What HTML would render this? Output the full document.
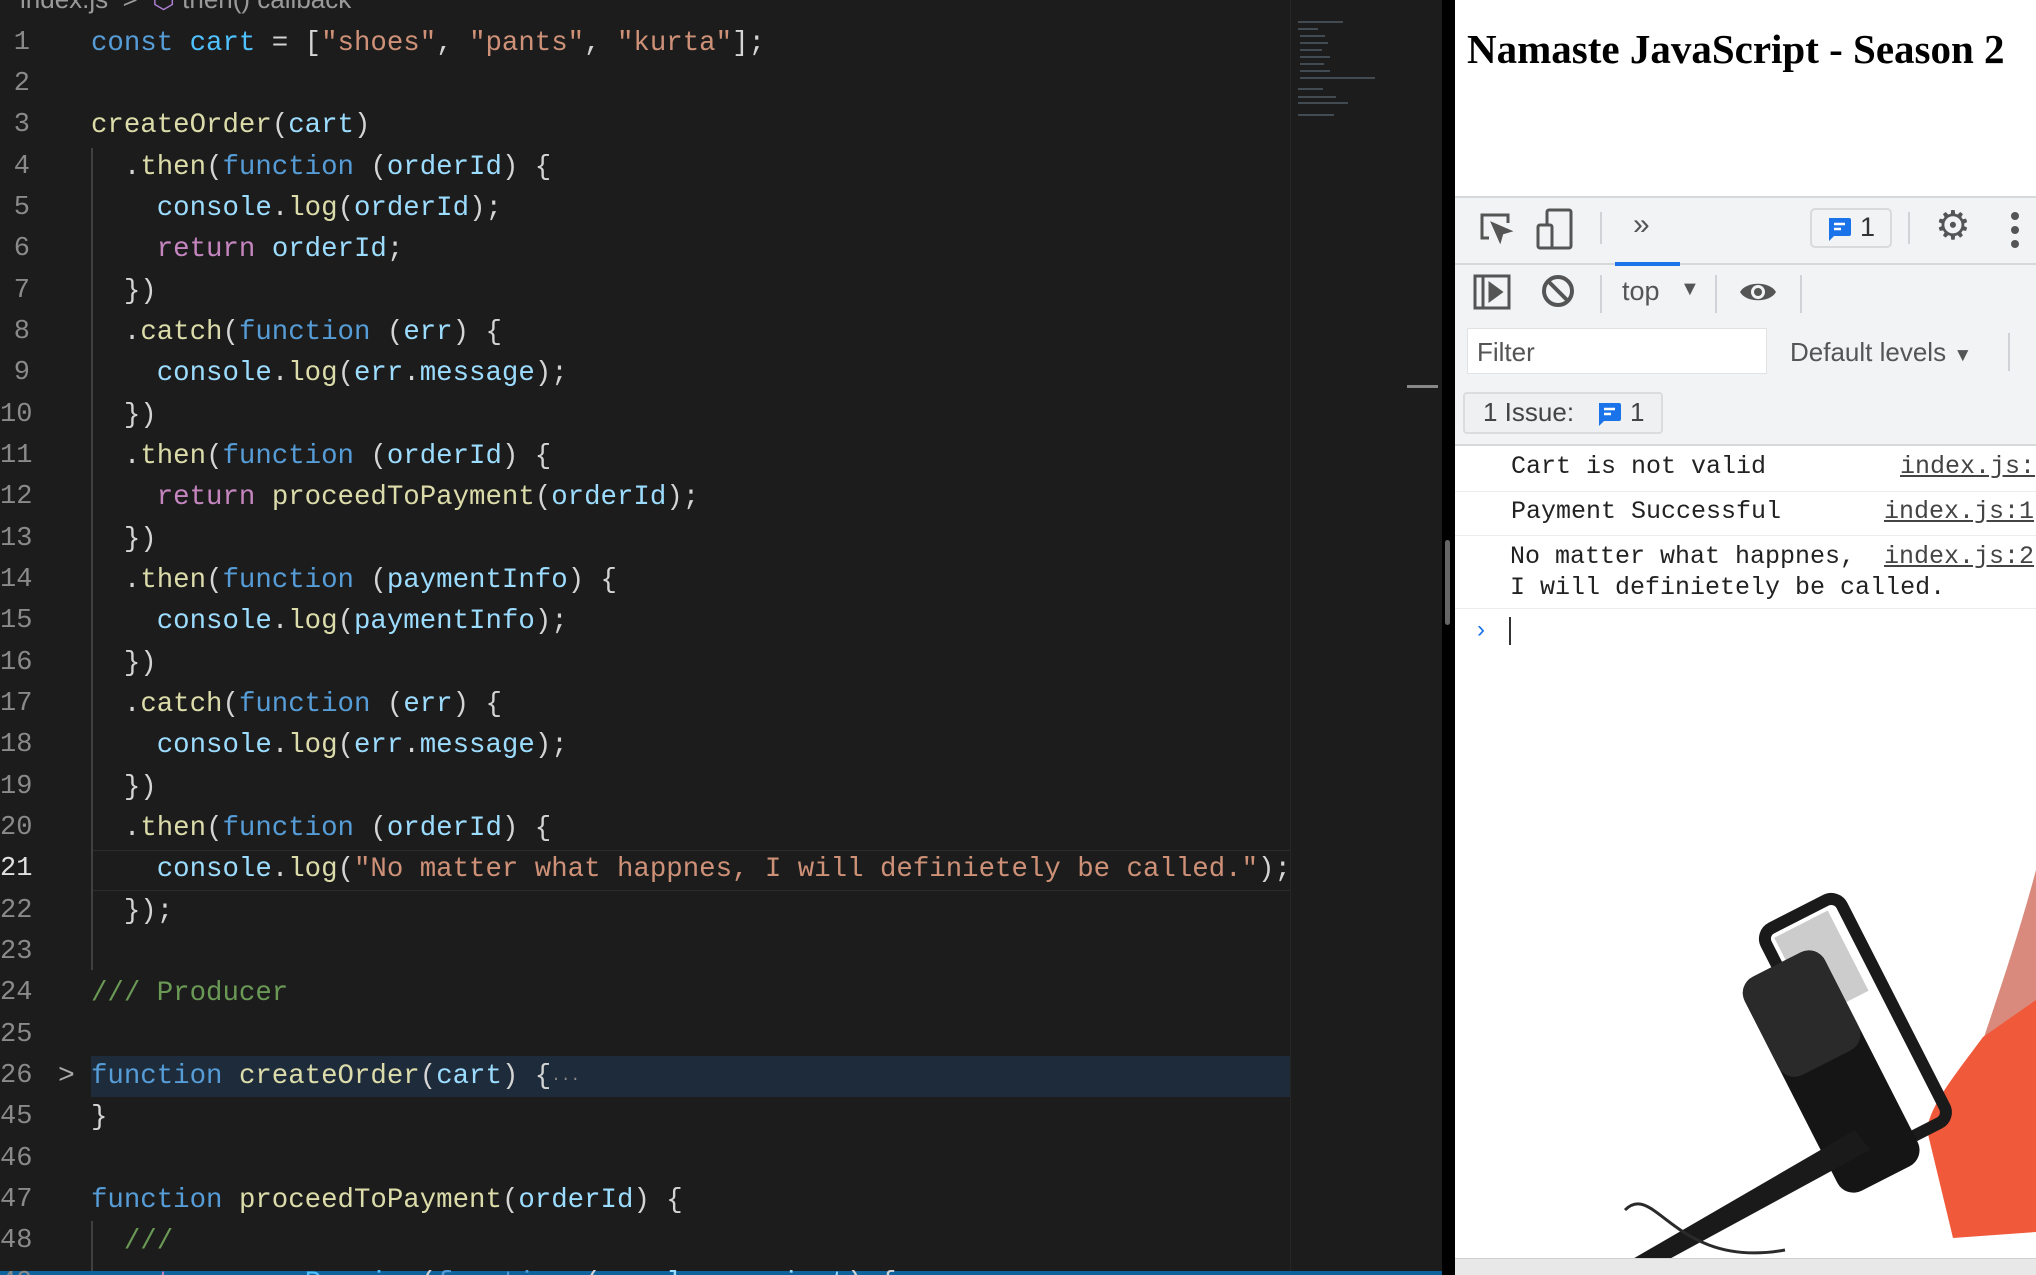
<!DOCTYPE html>
<html><head><meta charset="utf-8"><style>
*{margin:0;padding:0;box-sizing:border-box}
body{width:2036px;height:1275px;overflow:hidden;background:#1b1b1b;position:relative;font-family:"Liberation Mono",monospace}
#ed{position:absolute;left:0;top:0;width:1442px;height:1275px;background:#1c1c1c;overflow:hidden}
.ln{position:absolute;left:0;width:30px;text-align:right;color:#8a8a8a;font-size:27px;line-height:41.33px;height:41.33px}
.cl{position:absolute;left:91px;font-size:27.4px;line-height:41.33px;height:41.33px;white-space:pre;color:#d4d4d4}
.k{color:#569cd6}.v{color:#4fc1ff}.s{color:#ce9178}.f{color:#dcdcaa}.p{color:#9cdcfe}.r{color:#c586c0}.c{color:#6a9955}
#rp{position:absolute;left:1455px;top:0;width:581px;height:1275px;background:#fff;overflow:hidden;font-family:"Liberation Sans",sans-serif}
.abs{position:absolute}
.sep{position:absolute;width:2px;background:#cfd2d6}
.mono{font-family:"Liberation Mono",monospace;font-size:25px;color:#222;position:absolute;white-space:pre}
.lnk{text-decoration:underline;color:#444}
#code{position:absolute;left:0;top:3px;width:1442px;height:1275px}
.mm{position:absolute;height:2px;background:#6a7a88;opacity:.5}
</style></head><body>
<div id="ed">
<div class="abs" style="left:20px;top:-16px;color:#9a9a9a;font-family:'Liberation Sans',sans-serif;font-size:26px;white-space:pre">index.js  &gt;  <span style="color:#b180d7">⬡</span> then() callback</div>
<div class="abs" style="left:91px;top:1056px;width:1200px;height:41px;background:#1e2b3a"></div>
<div class="abs" style="left:91px;top:850px;width:1200px;height:41px;border:1px solid #2c2c2c"></div>
<div class="abs" style="left:91px;top:148px;width:2px;height:822px;background:#404040"></div>
<div class="abs" style="left:91px;top:1221px;width:2px;height:60px;background:#404040"></div>
<div class="abs" style="left:1290px;top:0;width:1px;height:1275px;background:#262626"></div>
<div class="abs" style="left:1407px;top:385px;width:31px;height:3px;background:#888"></div>
<div class="mm" style="left:1298px;top:21px;width:45px"></div>
<div class="mm" style="left:1298px;top:28px;width:20px"></div>
<div class="mm" style="left:1300px;top:35px;width:25px"></div>
<div class="mm" style="left:1300px;top:42px;width:28px"></div>
<div class="mm" style="left:1300px;top:49px;width:22px"></div>
<div class="mm" style="left:1300px;top:56px;width:30px"></div>
<div class="mm" style="left:1300px;top:63px;width:24px"></div>
<div class="mm" style="left:1300px;top:70px;width:30px"></div>
<div class="mm" style="left:1300px;top:77px;width:75px"></div>
<div class="mm" style="left:1298px;top:88px;width:25px"></div>
<div class="mm" style="left:1298px;top:96px;width:38px"></div>
<div class="mm" style="left:1298px;top:102px;width:50px"></div>
<div class="mm" style="left:1298px;top:114px;width:36px"></div>
<div class="abs" style="left:0;top:1271px;width:1442px;height:4px;background:#0e639c"></div>
<div id="code">
<div class="abs" style="left:58px;top:1058px;color:#aaa;font-size:28px">&gt;</div>
<div class="ln" style="top:19.6px">1</div><div class="cl" style="top:19.6px"><span class="k">const</span> <span class="v">cart</span> = [<span class="s">"shoes"</span>, <span class="s">"pants"</span>, <span class="s">"kurta"</span>];</div>
<div class="ln" style="top:60.9px">2</div>
<div class="ln" style="top:102.3px">3</div><div class="cl" style="top:102.3px"><span class="f">createOrder</span>(<span class="p">cart</span>)</div>
<div class="ln" style="top:143.6px">4</div><div class="cl" style="top:143.6px">  .<span class="f">then</span>(<span class="k">function</span> (<span class="p">orderId</span>) {</div>
<div class="ln" style="top:184.9px">5</div><div class="cl" style="top:184.9px">    <span class="p">console</span>.<span class="f">log</span>(<span class="p">orderId</span>);</div>
<div class="ln" style="top:226.3px">6</div><div class="cl" style="top:226.3px">    <span class="r">return</span> <span class="p">orderId</span>;</div>
<div class="ln" style="top:267.6px">7</div><div class="cl" style="top:267.6px">  })</div>
<div class="ln" style="top:308.9px">8</div><div class="cl" style="top:308.9px">  .<span class="f">catch</span>(<span class="k">function</span> (<span class="p">err</span>) {</div>
<div class="ln" style="top:350.2px">9</div><div class="cl" style="top:350.2px">    <span class="p">console</span>.<span class="f">log</span>(<span class="p">err</span>.<span class="p">message</span>);</div>
<div class="ln" style="top:391.6px">10</div><div class="cl" style="top:391.6px">  })</div>
<div class="ln" style="top:432.9px">11</div><div class="cl" style="top:432.9px">  .<span class="f">then</span>(<span class="k">function</span> (<span class="p">orderId</span>) {</div>
<div class="ln" style="top:474.2px">12</div><div class="cl" style="top:474.2px">    <span class="r">return</span> <span class="f">proceedToPayment</span>(<span class="p">orderId</span>);</div>
<div class="ln" style="top:515.6px">13</div><div class="cl" style="top:515.6px">  })</div>
<div class="ln" style="top:556.9px">14</div><div class="cl" style="top:556.9px">  .<span class="f">then</span>(<span class="k">function</span> (<span class="p">paymentInfo</span>) {</div>
<div class="ln" style="top:598.2px">15</div><div class="cl" style="top:598.2px">    <span class="p">console</span>.<span class="f">log</span>(<span class="p">paymentInfo</span>);</div>
<div class="ln" style="top:639.6px">16</div><div class="cl" style="top:639.6px">  })</div>
<div class="ln" style="top:680.9px">17</div><div class="cl" style="top:680.9px">  .<span class="f">catch</span>(<span class="k">function</span> (<span class="p">err</span>) {</div>
<div class="ln" style="top:722.2px">18</div><div class="cl" style="top:722.2px">    <span class="p">console</span>.<span class="f">log</span>(<span class="p">err</span>.<span class="p">message</span>);</div>
<div class="ln" style="top:763.5px">19</div><div class="cl" style="top:763.5px">  })</div>
<div class="ln" style="top:804.9px">20</div><div class="cl" style="top:804.9px">  .<span class="f">then</span>(<span class="k">function</span> (<span class="p">orderId</span>) {</div>
<div class="ln" style="top:846.2px;color:#e0e0e0">21</div><div class="cl" style="top:846.2px">    <span class="p">console</span>.<span class="f">log</span>(<span class="s">"No matter what happnes, I will definietely be called."</span>);</div>
<div class="ln" style="top:887.5px">22</div><div class="cl" style="top:887.5px">  });</div>
<div class="ln" style="top:928.9px">23</div>
<div class="ln" style="top:970.2px">24</div><div class="cl" style="top:970.2px"><span class="c">/// Producer</span></div>
<div class="ln" style="top:1011.5px">25</div>
<div class="ln" style="top:1052.9px">26</div><div class="cl" style="top:1052.9px"><span class="k">function</span> <span class="f">createOrder</span>(<span class="p">cart</span>) {<span style="color:#888;font-size:16px">···</span></div>
<div class="ln" style="top:1094.2px">45</div><div class="cl" style="top:1094.2px">}</div>
<div class="ln" style="top:1135.5px">46</div>
<div class="ln" style="top:1176.8px">47</div><div class="cl" style="top:1176.8px"><span class="k">function</span> <span class="f">proceedToPayment</span>(<span class="p">orderId</span>) {</div>
<div class="ln" style="top:1218.2px">48</div><div class="cl" style="top:1218.2px">  <span class="c">///</span></div>
<div class="ln" style="top:1259.5px">49</div><div class="cl" style="top:1259.5px">  <span class="r">return</span> <span class="k">new</span> <span class="v">Promise</span>(<span class="k">function</span> (<span class="p">resolve</span>, <span class="p">reject</span>) {</div>
</div>
</div>
<div class="abs" style="left:1442px;top:0;width:13px;height:1275px;background:#000"></div>
<div class="abs" style="left:1445px;top:540px;width:5px;height:85px;background:#666;border-radius:3px"></div>

<div id="rp">
<div class="abs" style="left:12px;top:25px;font-family:'Liberation Serif',serif;font-weight:bold;font-size:41px;color:#000;white-space:nowrap">Namaste JavaScript - Season 2</div>
<div class="abs" style="left:0;top:196px;width:581px;height:250px;background:#f1f3f4;border-top:2px solid #d6d8da"></div>
<div class="abs" style="left:0;top:263px;width:581px;height:2px;background:#d6d8da"></div>
<div class="abs" style="left:0;top:444px;width:581px;height:2px;background:#d6d8da"></div>
<svg class="abs" style="left:22px;top:210px" width="40" height="40" viewBox="0 0 40 40" fill="none" stroke="#555" stroke-width="3"><path d="M12 28H5V5h26v8"/><path d="M16 14l16 7-7 2-2 7z" fill="#555"/></svg>
<svg class="abs" style="left:80px;top:207px" width="40" height="44" viewBox="0 0 40 44" fill="none" stroke="#555" stroke-width="3"><rect x="12" y="3" width="24" height="38" rx="2"/><rect x="3" y="18" width="14" height="23" rx="2" fill="#f1f3f4"/></svg>
<div class="sep" style="left:145px;top:212px;height:32px"></div>
<div class="abs" style="left:178px;top:208px;font-size:30px;color:#555">»</div>
<div class="abs" style="left:160px;top:262px;width:65px;height:4px;background:#1a73e8"></div>
<div class="abs" style="left:355px;top:208px;width:82px;height:40px;border:2px solid #d8dadc;border-radius:5px;background:#f1f3f4"></div>
<svg class="abs" style="left:370px;top:215px" width="28" height="28" viewBox="0 0 28 28"><path d="M4 3h20a2 2 0 0 1 2 2v14a2 2 0 0 1-2 2H9l-5 5z" fill="#1a73e8"/><path d="M9 9h11M9 14h7" stroke="#fff" stroke-width="2.5"/></svg>
<div class="abs" style="left:405px;top:212px;font-size:27px;color:#333">1</div>
<div class="sep" style="left:453px;top:212px;height:32px"></div>
<div class="abs" style="left:480px;top:203px;font-size:40px;color:#555">⚙</div>
<svg class="abs" style="left:554px;top:210px" width="12" height="40"><circle cx="6" cy="6" r="4" fill="#555"/><circle cx="6" cy="20" r="4" fill="#555"/><circle cx="6" cy="34" r="4" fill="#555"/></svg>
<svg class="abs" style="left:18px;top:274px" width="38" height="36" viewBox="0 0 38 36" fill="none" stroke="#555" stroke-width="3"><rect x="2" y="2" width="34" height="32"/><path d="M10 2v32"/><path d="M17 10l11 8-11 8z" fill="#555"/></svg>
<svg class="abs" style="left:85px;top:273px" width="36" height="36" viewBox="0 0 36 36" fill="none" stroke="#555" stroke-width="4"><circle cx="18" cy="18" r="14"/><path d="M8 8l20 20"/></svg>
<div class="sep" style="left:145px;top:275px;height:38px"></div>
<div class="abs" style="left:167px;top:276px;font-size:27px;color:#555">top</div>
<div class="abs" style="left:225px;top:278px;font-size:20px;color:#555">▼</div>
<div class="sep" style="left:260px;top:275px;height:38px"></div>
<svg class="abs" style="left:283px;top:277px" width="40" height="30" viewBox="0 0 40 30"><path d="M2 15C8 4 32 4 38 15C32 26 8 26 2 15z" fill="#555"/><circle cx="20" cy="15" r="7" fill="#f1f3f4"/><circle cx="20" cy="15" r="4" fill="#555"/></svg>
<div class="sep" style="left:345px;top:275px;height:38px"></div>
<div class="abs" style="left:12px;top:328px;width:300px;height:46px;background:#fff;border:1px solid #e0e2e4"></div>
<div class="abs" style="left:22px;top:337px;font-size:26px;color:#555">Filter</div>
<div class="abs" style="left:335px;top:337px;font-size:26px;color:#555;white-space:nowrap">Default levels <span style="font-size:19px">▼</span></div>
<div class="sep" style="left:553px;top:333px;height:38px"></div>
<div class="abs" style="left:8px;top:392px;width:200px;height:42px;border:2px solid #dadcde;border-radius:4px;background:#eef0f1"></div>
<div class="abs" style="left:28px;top:397px;font-size:26px;color:#444;white-space:nowrap">1 Issue:</div>
<svg class="abs" style="left:140px;top:400px" width="28" height="28" viewBox="0 0 28 28"><path d="M4 3h20a2 2 0 0 1 2 2v14a2 2 0 0 1-2 2H9l-5 5z" fill="#1a73e8"/><path d="M9 9h11M9 14h7" stroke="#fff" stroke-width="2.5"/></svg>
<div class="abs" style="left:175px;top:397px;font-size:26px;color:#444">1</div>
<div class="mono" style="left:56px;top:452px">Cart is not valid</div>
<div class="mono lnk" style="left:445px;top:452px">index.js:</div>
<div class="abs" style="left:0;top:491px;width:581px;height:1px;background:#ececec"></div>
<div class="mono" style="left:56px;top:497px">Payment Successful</div>
<div class="mono lnk" style="left:429px;top:497px">index.js:1</div>
<div class="abs" style="left:0;top:535px;width:581px;height:1px;background:#ececec"></div>
<div class="mono" style="left:55px;top:542px">No matter what happnes,</div>
<div class="mono lnk" style="left:429px;top:542px">index.js:2</div>
<div class="mono" style="left:55px;top:573px">I will definietely be called.</div>
<div class="abs" style="left:0;top:608px;width:581px;height:1px;background:#ececec"></div>
<div class="abs" style="left:22px;top:616px;font-size:24px;color:#1a73e8">›</div>
<div class="abs" style="left:54px;top:617px;width:2px;height:28px;background:#333"></div>
<svg class="abs" style="left:0;top:0" width="581" height="1275">
<path d="M581 870 C565 930 545 990 528 1040 L581 1010z" fill="#d98a7c"/>
<path d="M581 1000 L528 1037 C500 1075 475 1105 472 1130 L498 1238 L581 1232z" fill="#f0593a"/>
<g transform="translate(20 0) rotate(-27 385 1040)">
<rect x="345" y="900" width="85" height="250" rx="12" fill="none" stroke="#1a1a1a" stroke-width="12"/>
<rect x="355" y="910" width="60" height="90" fill="#ccc"/>
<rect x="300" y="935" width="90" height="240" rx="18" fill="#151515"/>
<rect x="300" y="935" width="90" height="110" rx="18" fill="#2a2a2a"/>
</g>
<path d="M400 1130 L150 1275 L185 1275 L415 1150z" fill="#1a1a1a"/>
<path d="M170 1210 C200 1180 220 1270 330 1250" stroke="#2a2a2a" stroke-width="3" fill="none"/>
</svg>
<div class="abs" style="left:0;top:1258px;width:581px;height:17px;background:#e8e8e8;border-top:1px solid #d0d0d0"></div>
</div>
</body></html>
